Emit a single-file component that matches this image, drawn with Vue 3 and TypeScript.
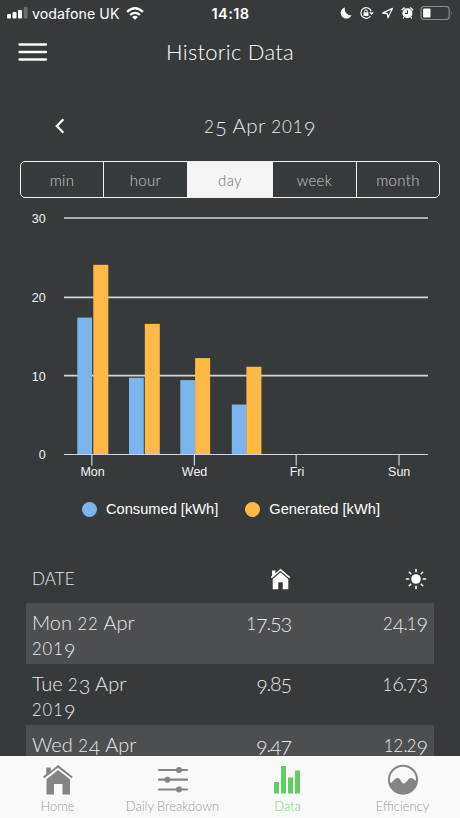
<script setup lang="ts">
interface Reading { date: string; consumed: string; generated: string }
interface Bar { x: number; consumed: number; generated: number; gap: number }

const ranges: string[] = ['min', 'hour', 'day', 'week', 'month']
const activeRange = 'day'

const readings: Reading[] = [
  { date: 'Mon 22 Apr 2019', consumed: '17.53', generated: '24.19' },
  { date: 'Tue 23 Apr 2019', consumed: '9.85', generated: '16.73' },
  { date: 'Wed 24 Apr 2019', consumed: '9.47', generated: '12.29' },
]

const base = 254.5
const scale = 7.87
const bars: Bar[] = [
  { x: 77.3, consumed: 17.4, generated: 24.1, gap: 16 },
  { x: 129, consumed: 9.75, generated: 16.6, gap: 15.8 },
  { x: 180.3, consumed: 9.45, generated: 12.25, gap: 14.8 },
  { x: 231.8, consumed: 6.35, generated: 11.15, gap: 14.6 },
]
const grid = [
  { y: 18, label: '30' },
  { y: 97.3, label: '20' },
  { y: 175.7, label: '10' },
]
const days = [
  { x: 91.8, label: 'Mon', mid: 92.6 },
  { x: 194.4, label: 'Wed', mid: 194.6 },
  { x: 296.2, label: 'Fri', mid: 297 },
  { x: 399, label: 'Sun', mid: 399.2 },
]

// Old-style figures: 0-2 sit at x-height, 3-5, 7 and 9 hang below the baseline.
function glyphs(text: string): { t: string; k: string }[] {
  return (text.match(/[012]+|[34579]+|[^0-57 9]+| /g) ?? []).map((t) => ({
    t,
    k: /[012]/.test(t) ? 'low' : /[34579]/.test(t) ? 'hang' : 'plain',
  }))
}
</script>

<template>
  <div class="screen">
    <div class="status">
      <div class="carrier">
        <svg width="21" height="12" viewBox="0 0 21 12" fill="#fff">
          <rect x="0" y="7" width="4" height="4.6" rx="1" />
          <rect x="5.5" y="5" width="4" height="6.6" rx="1" />
          <rect x="11" y="3" width="4" height="8.6" rx="1" />
          <rect x="16.6" y="0" width="4" height="11.6" rx="1" fill="#6b6d6e" />
        </svg>
        <span class="operator">vodafone UK</span>
        <svg class="wifi" width="18" height="13" viewBox="0 0 18 13" fill="none" stroke="#fff" stroke-width="2.3">
          <path d="M1.1 4.8Q9-2.2 16.9 4.8M4.1 8Q9 3.7 13.9 8" />
          <path d="M6.1 9.9Q9 7.6 11.9 9.9L9 12.8Z" fill="#fff" stroke="none" />
        </svg>
      </div>
      <span class="clock">14:18</span>
      <svg class="indicators" width="114" height="16" viewBox="340 5 114 16" fill="none" stroke="#fff">
        <path d="M345 7.4A5.7 5.7 0 1 0 351.6 15.3A6.2 6.2 0 0 1 345 7.4Z" fill="#fff" stroke="none" />
        <path d="M370.6 16A5.3 5.3 0 1 1 371.2 11.2" stroke-width="1.2" />
        <path d="M369.2 12.2H373.8L371.5 15Z" fill="#fff" stroke="none" />
        <rect x="363.5" y="12.2" width="5" height="3.8" rx=".5" fill="#fff" stroke="none" />
        <path d="M364.6 12.2V11.3A1.4 1.4 0 0 1 367.4 11.3V12.2" stroke-width="1" />
        <path d="M382.6 13.1L392.4 8.4L388 17.8L387.3 13.7Z" stroke-width="1.2" stroke-linejoin="round" />
        <circle cx="407.4" cy="13.2" r="5" fill="#fff" stroke="none" />
        <path d="M402.2 9.7L404.3 7.9M410.5 7.9L412.6 9.7" stroke-width="1.4" stroke-linecap="round" />
        <path d="M404 17L403.3 18M410.8 17L411.5 18" stroke-width="1.2" stroke-linecap="round" />
        <path d="M407.4 10.2V13.4H405" stroke="#373a3b" stroke-width="1.1" />
        <rect x="421" y="6.5" width="28.2" height="13" rx="3.2" stroke="#8b8d8e" stroke-width="1.2" />
        <rect x="423.1" y="8.4" width="7.4" height="9.2" rx="1" fill="#fff" stroke="none" />
        <path d="M451 11V15.2Q452.7 13.1 451 11Z" fill="#8b8d8e" stroke="none" />
      </svg>
    </div>

    <header class="header">
      <svg class="menu" width="30" height="18" viewBox="0 0 30 18" stroke="#fff" stroke-width="2.3" stroke-linecap="round">
        <path d="M1.5 1.5H28M1.5 9H28M1.5 16.5H28" />
      </svg>
      <h1>Historic Data</h1>
    </header>

    <div class="date-nav">
      <svg width="10" height="16" viewBox="0 0 10 16" fill="none" stroke="#fff" stroke-width="2.3">
        <path d="M8.4 1.2L1.8 8L8.4 14.8" />
      </svg>
      <span class="date"><span v-for="(g, i) in glyphs('25 Apr 2019')" :key="i" :class="g.k">{{ g.t }}</span></span>
    </div>

    <div class="ranges">
      <div v-for="r in ranges" :key="r" class="range" :class="{ active: r === activeRange }">{{ r }}</div>
    </div>

    <svg class="chart" width="460" height="285" viewBox="0 0 460 285">
      <g stroke="#d3d4d6" stroke-width="1.7">
        <line v-for="g in grid" :key="g.y" x1="64" x2="428" :y1="g.y" :y2="g.y" />
      </g>
      <g v-for="b in bars" :key="b.x">
        <rect :x="b.x" :y="base - b.consumed * scale" width="14.8" :height="b.consumed * scale" fill="#7cb5ec" />
        <rect :x="b.x + b.gap" :y="base - b.generated * scale" width="15" :height="b.generated * scale" fill="#ffb947" />
      </g>
      <g stroke="#ccd3e6" stroke-width="1.2">
        <path d="M64 254.5H428" />
        <line v-for="d in days" :key="d.x" :x1="d.x" :x2="d.x" y1="254.5" y2="265.5" />
      </g>
      <g class="axis" text-anchor="end">
        <text v-for="g in grid" :key="g.label" x="45.6" :y="g.y + 5">{{ g.label }}</text>
        <text x="45.6" y="259">0</text>
      </g>
      <g class="axis" text-anchor="middle">
        <text v-for="d in days" :key="d.label" :x="d.mid" y="276">{{ d.label }}</text>
      </g>
    </svg>

    <div class="legend">
      <span class="key"><i class="dot blue"></i>Consumed [kWh]</span>
      <span class="key"><i class="dot orange"></i>Generated [kWh]</span>
    </div>

    <div class="table">
      <div class="row head">
        <span class="col-title">DATE</span>
        <span class="cell">
          <svg class="house" width="21" height="22" viewBox="0 0 32 34" fill="#fff">
            <path d="M3 4H8V8L16 1L31 14L29.5 16L16 4.5L2.5 16L1 14L3 12Z" />
            <path d="M16 7L28 17V33H19.5V22H12.5V33H4V17Z" />
          </svg>
        </span>
        <span class="cell">
          <svg class="sun" width="22" height="22" viewBox="0 0 22 22" stroke="#fff" stroke-width="1.6" stroke-linecap="round">
            <circle cx="11" cy="11" r="4.8" fill="#fff" stroke="none" />
            <path d="M11 1.5V3.6M11 18.4V20.5M1.5 11H3.6M18.4 11H20.5M4.3 4.3L5.8 5.8M16.2 16.2L17.7 17.7M4.3 17.7L5.8 16.2M16.2 5.8L17.7 4.3" />
          </svg>
        </span>
      </div>
      <div v-for="r in readings" :key="r.date" class="row">
        <span class="day"><span v-for="(g, i) in glyphs(r.date)" :key="i" :class="g.k">{{ g.t }}</span></span>
        <span class="cell"><span v-for="(g, i) in glyphs(r.consumed)" :key="i" :class="g.k">{{ g.t }}</span></span>
        <span class="cell"><span v-for="(g, i) in glyphs(r.generated)" :key="i" :class="g.k">{{ g.t }}</span></span>
      </div>
    </div>

    <nav class="tabs">
      <div class="tab home">
        <svg width="32" height="34" viewBox="0 0 32 34" fill="#848484">
          <path d="M4.2 4.5H8.8V8L16 2L30.8 13.7L29.6 15.3L16 4.7L2.2 15.3L1 13.7L4.2 11Z" />
          <path d="M16 7L28 16.3V31.6H20.5V21H12V31.6H4.5V16.3Z" />
        </svg>
        <span>Home</span>
      </div>
      <div class="tab daily">
        <svg width="32" height="34" viewBox="0 0 32 34" fill="#848484" stroke="#848484">
          <path d="M2 7H30M2 16.7H30M2 26.5H30" stroke-width="2.2" stroke-linecap="round" />
          <circle cx="22" cy="7" r="3" stroke="none" /><circle cx="10.5" cy="16.7" r="3" stroke="none" /><circle cx="22" cy="26.5" r="3" stroke="none" />
        </svg>
        <span>Daily Breakdown</span>
      </div>
      <div class="tab data">
        <svg width="32" height="34" viewBox="0 0 32 34" fill="#5fce64">
          <rect x="2" y="19" width="5" height="11.5" /><rect x="9" y="3" width="5" height="27.5" /><rect x="16" y="14.5" width="5" height="16" /><rect x="23" y="7.5" width="5" height="23" />
        </svg>
        <span>Data</span>
      </div>
      <div class="tab efficiency">
        <svg width="32" height="34" viewBox="0 0 32 34" fill="#848484">
          <circle cx="16" cy="16.7" r="14" fill="none" stroke="#848484" stroke-width="2" />
          <path d="M2 20.3C6 20.3 7.3 15 10.5 15C13.8 15 14 20.4 16.8 20.4C19.7 20.4 20.7 15 24 15C26.7 15 27.6 18 30.5 18A14.5 14.5 0 0 1 2 20.3Z" />
        </svg>
        <span>Efficiency</span>
      </div>
    </nav>
  </div>
</template>

<style>
body { margin: 0; overflow: hidden; background: #373a3b; }
</style>

<style scoped>
.screen { width: 460px; height: 818px; overflow: hidden; display: flex; flex-direction: column; background: #373a3b; color: #e9eaea; font-family: Lato, "Open Sans", sans-serif; font-weight: 300; box-sizing: border-box; }
.screen svg { display: block; flex-shrink: 0; }
.status { height: 26px; flex-shrink: 0; display: grid; grid-template-columns: 1fr auto 1fr; align-items: center; padding: 0 6px 0 7px; font-family: Inter, sans-serif; color: #fff; }
.carrier { display: flex; align-items: center; }
.operator { margin-left: 4px; font-size: 14.2px; font-weight: 400; letter-spacing: .05px; white-space: nowrap; }
.wifi { margin-left: 7px; }
.clock { font-size: 14.5px; font-weight: 600; letter-spacing: .4px; }
.indicators { justify-self: end; }
.header { height: 52px; flex-shrink: 0; display: grid; grid-template-columns: 60px 1fr 60px; align-items: center; }
.menu { margin-left: 18px; }
h1 { margin: 0; padding-bottom: 2px; text-align: center; font-size: 22px; font-weight: 300; color: #fff; letter-spacing: .25px; }
.date-nav { height: 83px; flex-shrink: 0; box-sizing: border-box; padding: 12px 0 0 55px; display: flex; align-items: center; }
.date { margin-left: 139px; padding-bottom: 2px; font-size: 20.5px; white-space: pre; letter-spacing: .4px; }
.low { font-size: .83em; letter-spacing: 1px; line-height: 0; }
.hang { vertical-align: -.125em; line-height: 0; }
.plain { white-space: pre-wrap; }
.ranges { height: 37px; flex-shrink: 0; margin: 0 20px; box-sizing: border-box; border: 1.5px solid #f0f1f1; border-radius: 5px; display: grid; grid-template-columns: 82px 84px 85px 84px 1fr; overflow: hidden; }
.range { display: flex; align-items: center; justify-content: center; font-size: 15px; color: #c9cbcb; letter-spacing: .3px; border-left: 1.3px solid #f0f1f1; }
.range:first-child { border-left: 0; }
.range.active { background: #f5f5f5; color: #707273; }
.chart { margin-top: 2px; }
.axis { font: 12.5px "Liberation Sans", Arial, sans-serif; fill: #f4f4f4; }
.legend { height: 48px; flex-shrink: 0; padding-left: 82px; display: flex; align-items: center; gap: 27px; font: 14.65px "Liberation Sans", Arial, sans-serif; color: #fff; }
.key { display: flex; align-items: center; }
.dot { width: 15px; height: 15px; border-radius: 50%; margin-right: 9px; }
.blue { background: #7cb5ec; }
.orange { background: #ffb947; }
.table { margin: 22px 26px 0; height: 201px; overflow: hidden; flex-shrink: 0; }
.row { display: grid; grid-template-columns: 130px 130px 1fr; height: 61.3px; padding: 7px 6px 0; font-size: 20px; line-height: 25px; box-sizing: border-box; }
.row.head { height: 47.5px; padding-top: 0; align-items: center; }
.row:nth-child(even) { background: #4d4e50; }
.col-title { font-size: 17px; letter-spacing: .1px; }
.cell { text-align: right; white-space: nowrap; }
.cell .low { letter-spacing: .1px; }
.cell .hang { letter-spacing: -1.2px; }
.cell .hang:last-child { margin-right: 1.2px; }
.cell .plain { letter-spacing: -1.2px; }
.head .cell { display: flex; justify-content: flex-end; }
.house { margin-right: 1px; }
.sun { margin-right: 1px; }
.tabs { height: 62px; flex-shrink: 0; background: #f9f9f9; display: grid; grid-template-columns: repeat(4, 1fr); }
.tab { display: flex; flex-direction: column; align-items: center; padding-top: 7px; font-size: 12.9px; line-height: 18px; color: #999; white-space: nowrap; }
.tab.data { color: #72d276; }
</style>
